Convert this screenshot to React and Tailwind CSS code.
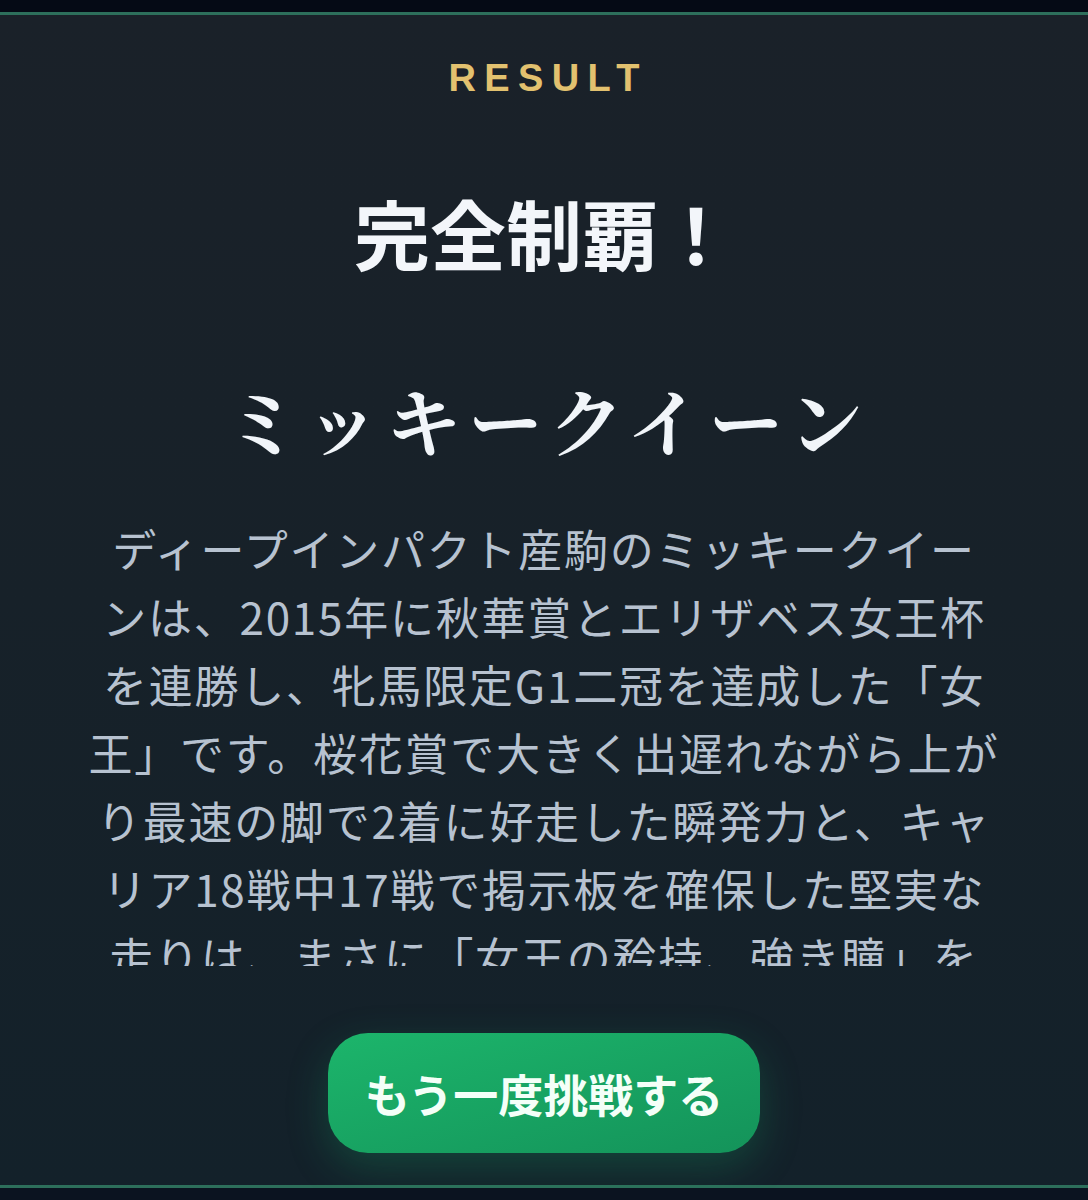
export default function App() {
  return (
    <div className="min-h-[1200px] flex flex-col bg-[#070d18] font-['Noto_Sans_CJK_JP',sans-serif]">
      <div className="h-3 bg-[#050a15]" />
      <main className="flex-1 border-y-[3px] border-[#2d6f5b] bg-gradient-to-b from-[#1a2129] via-[#172129] to-[#13212a] flex flex-col items-center">
        <p className="mt-[44px] font-['Liberation_Sans',sans-serif] font-bold text-[38px] leading-none tracking-[0.22em] pl-[0.22em] text-[#e2c16f]">
          RESULT
        </p>
        <h1 className="mt-[97px] text-[76px] leading-none font-bold text-[#f3f6fa]">
          完全制覇！
        </h1>
        <h2 className="mt-[112px] text-[74px] leading-none font-bold tracking-[0.1em] pl-[0.1em] text-[#f1f5f9] font-['Noto_Serif_CJK_JP','Noto_Serif_JP','Noto_Sans_CJK_JP',serif]">
          ミッキークイーン
        </h2>
        <div className="mt-[58px] h-[452px] w-[980px] overflow-hidden">
          <p className="text-center text-[44px] leading-[68px] tracking-[0.04em] text-[#b7c2d0]">
            ディープインパクト産駒のミッキークイー<br />
            ンは、2015年に秋華賞とエリザベス女王杯<br />
            を連勝し、牝馬限定G1二冠を達成した「女<br />
            王」です。桜花賞で大きく出遅れながら上が<br />
            り最速の脚で2着に好走した瞬発力と、キャ<br />
            リア18戦中17戦で掲示板を確保した堅実な<br />
            走りは、まさに「女王の矜持、強き瞳」を<br />
            体現した一頭です。
          </p>
        </div>
        <button className="mt-[67px] w-[432px] h-[120px] rounded-[40px] bg-gradient-to-br from-[#1cb56b] to-[#14935a] text-[45px] font-bold text-[#f4fff8] leading-none shadow-[0_14px_40px_rgba(22,163,100,0.28)] flex items-center justify-center">
          もう一度挑戦する
        </button>
      </main>
      <div className="h-3 bg-[#0b1320]" />
    </div>
  );
}
